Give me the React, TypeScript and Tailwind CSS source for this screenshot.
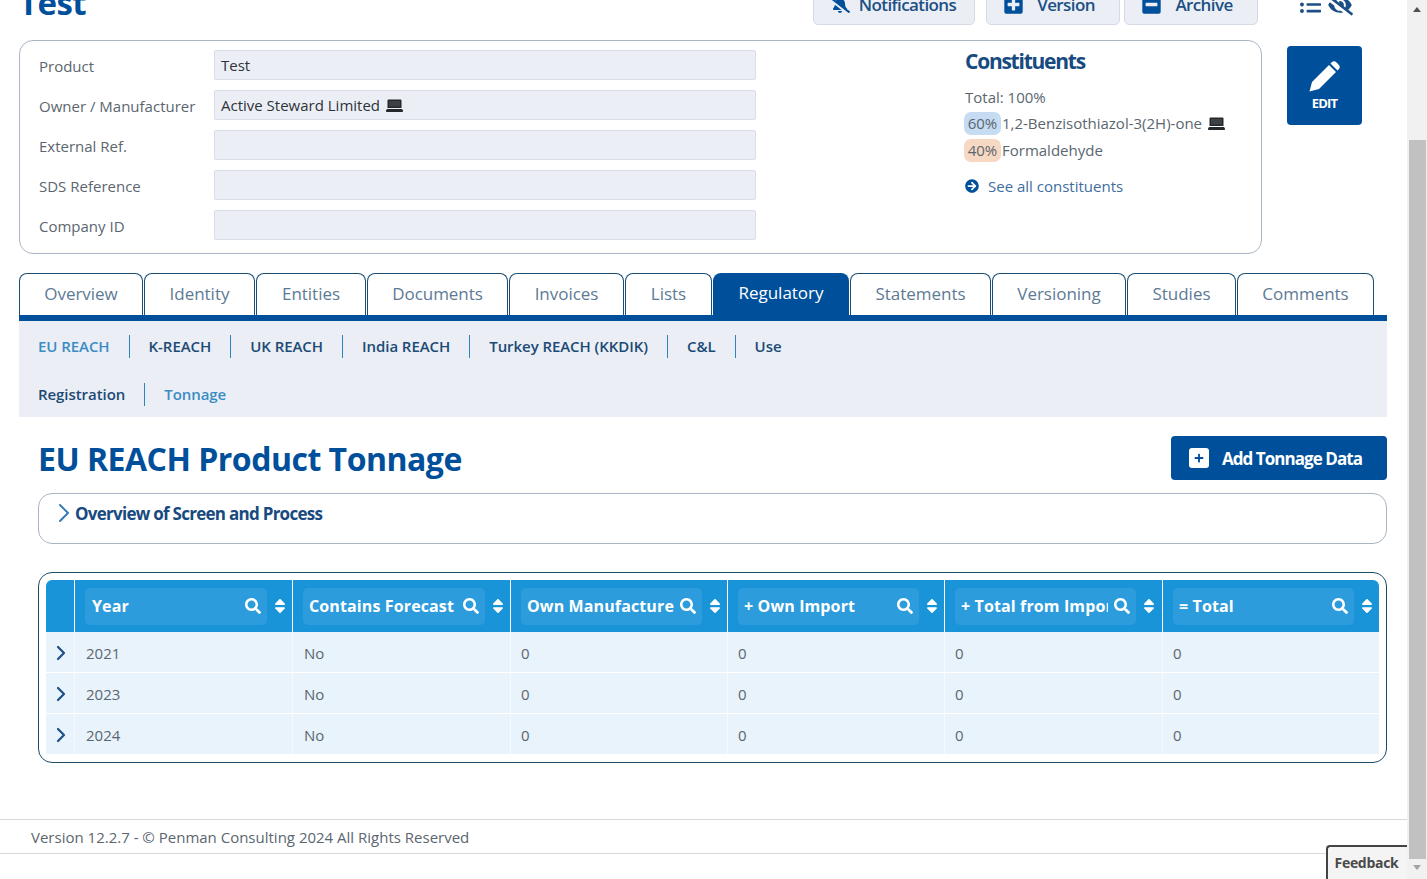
import { ChevronRight } from 'lucide-react';
import {
  FaArrowCircleRight,
  FaBellSlash,
  FaEyeSlash,
  FaListUl,
  FaMinusSquare,
  FaPlus,
  FaPlusSquare,
  FaSearch,
  FaSort,
} from 'react-icons/fa';

const fields = [
  { label: 'Product', value: 'Test' },
  { label: 'Owner / Manufacturer', value: 'Active Steward Limited', laptop: true },
  { label: 'External Ref.', value: '' },
  { label: 'SDS Reference', value: '' },
  { label: 'Company ID', value: '' },
];

const tabs = [
  { name: 'Overview', w: 'w-[124px]' },
  { name: 'Identity', w: 'w-[111px]' },
  { name: 'Entities', w: 'w-[110px]' },
  { name: 'Documents', w: 'w-[141px]' },
  { name: 'Invoices', w: 'w-[115px]' },
  { name: 'Lists', w: 'w-[87px]' },
  { name: 'Regulatory', w: 'w-[136px]', active: true },
  { name: 'Statements', w: 'w-[141px]' },
  { name: 'Versioning', w: 'w-[134px]' },
  { name: 'Studies', w: 'w-[109px]' },
  { name: 'Comments', w: 'w-[137px]' },
];

const columns = [
  { name: 'Year', w: 'w-[218px]', chip: 'w-[182px]', cell: 'pl-[11px]' },
  { name: 'Contains Forecast', w: 'w-[218px]', chip: 'w-[182px]', cell: 'pl-[11px]' },
  { name: 'Own Manufacture', w: 'w-[217px]', chip: 'w-[181px]', cell: 'pl-[10px]' },
  { name: '+ Own Import', w: 'w-[217px]', chip: 'w-[181px]', cell: 'pl-[10px]' },
  { name: '+ Total from Import', w: 'w-[218px]', chip: 'w-[181px]', cell: 'pl-[10px]' },
  { name: '= Total', w: 'w-[216px]', chip: 'w-[181px]', cell: 'pl-[10px]' },
];

const rows = [
  ['2021', 'No', '0', '0', '0', '0'],
  ['2023', 'No', '0', '0', '0', '0'],
  ['2024', 'No', '0', '0', '0', '0'],
];

function Laptop() {
  return (
    <svg width="17" height="13" viewBox="0 0 17 13" className="shrink-0">
      <path d="M2.5 0.5h12a1 1 0 0 1 1 1V9h-14V1.500a1 1 0 0 1 1-1z" fill="#26292c" />
      <rect x="3" y="2" width="11" height="5.500" fill="#3c4146" />
      <path d="M1 10h15l1 1.500a1 1 0 0 1-1 1.500H1a1 1 0 0 1-1-1.500z" fill="#26292c" />
    </svg>
  );
}

function SubNav({ items, activeItem }: { items: string[]; activeItem: string }) {
  return (
    <div className="flex h-[48px] items-center pt-[2px] pl-[19px]">
      {items.map((item, i) => (
        <div key={item} className="flex items-center">
          {i > 0 && <div className="mx-[19px] h-[23px] w-px bg-[#2f84b9]" />}
          <span
            className={`text-[15px] font-semibold tracking-[-0.06px] ${item === activeItem ? 'text-[#3a8cc4]' : 'text-[#1c4a75]'}`}
          >
            {item}
          </span>
        </div>
      ))}
    </div>
  );
}

export default function App() {
  return (
    <div className="flex h-[879px] overflow-hidden bg-white font-['Open_Sans',sans-serif] text-[15px] text-[#5b6670]">
      <div className="relative w-[1407px] shrink-0">
        {/* page is scrolled, top of the header is cut off */}
        <div className="-mt-[30px] mb-[15px] flex h-[55px] items-end justify-between pl-[19px]">
          <h1 className="-mb-[3px] text-[33px] leading-[50px] font-bold tracking-[-0.6px] text-[#004f9b]">Test</h1>
          <div className="flex items-center">
            <div className="flex h-[55px] w-[162px] items-center justify-center gap-[9px] rounded-b-[5px] border border-[#d5dbe5] bg-[#ebeff5] pt-[14px] pr-[2px] text-[17px] font-semibold tracking-[-0.6px] text-[#1c4f85]">
              <FaBellSlash className="text-[#004f9b]" size={20} />
              Notifications
            </div>
            <div className="ml-[11px] flex h-[55px] w-[134px] items-center justify-center gap-[13px] rounded-b-[5px] border border-[#d5dbe5] bg-[#ebeff5] pt-[14px] pr-[8px] text-[17px] font-semibold tracking-[-0.6px] text-[#1c4f85]">
              <FaPlusSquare className="text-[#004f9b]" size={21} />
              Version
            </div>
            <div className="ml-[4px] flex h-[55px] w-[134px] items-center justify-center gap-[13px] rounded-b-[5px] border border-[#d5dbe5] bg-[#ebeff5] pt-[14px] pr-[8px] text-[17px] font-semibold tracking-[-0.6px] text-[#1c4f85]">
              <FaMinusSquare className="text-[#004f9b]" size={21} />
              Archive
            </div>
            <div className="mr-[54px] ml-[42px] flex w-[53px] items-center justify-between pt-[14px] text-[#1c4f85]">
              <FaListUl size={21} />
              <FaEyeSlash size={26} />
            </div>
          </div>
        </div>

        <div className="flex items-start pl-[19px]">
          <div className="flex h-[214px] w-[1243px] rounded-[14px] border border-[#a9b5c2] pt-[9px] pl-[18px]">
            <div className="flex w-[719px] flex-col gap-[10px]">
              {fields.map((field) => (
                <div key={field.label} className="flex h-[30px] items-center">
                  <span className="w-[175px] shrink-0 pt-[3px] pl-px text-[15px]">{field.label}</span>
                  <div className="ml-px flex h-[30px] w-[542px] items-center gap-[6px] rounded-[2px] border border-[#d8dde6] bg-[#ebeff5] pl-[6px] text-[15px] text-[#2e3338]">
                    {field.value}
                    {field.laptop && <Laptop />}
                  </div>
                </div>
              ))}
            </div>
            <div className="ml-[208px] flex flex-col">
              <h2 className="-mt-[2px] text-[21px] leading-[26px] font-bold tracking-[-1.25px] text-[#164a80]">
                Constituents
              </h2>
              <div className="mt-[11px] leading-[24px]">Total: 100%</div>
              <div className="mt-[3px] flex h-[23px] items-center">
                <span className="-ml-[1px] flex h-[23px] w-[37px] items-center justify-center rounded-[7px] bg-[#c5dcf3]">
                  60%
                </span>
                <span className="ml-px">1,2-Benzisothiazol-3(2H)-one</span>
                <span className="ml-[6px]">
                  <Laptop />
                </span>
              </div>
              <div className="mt-[4px] flex h-[23px] items-center">
                <span className="-ml-[1px] flex h-[23px] w-[37px] items-center justify-center rounded-[7px] bg-[#f7d8c3]">
                  40%
                </span>
                <span className="ml-px">Formaldehyde</span>
              </div>
              <div className="mt-[13px] flex items-center text-[#3f6d9e]">
                <FaArrowCircleRight className="text-[#004f9b]" size={14} />
                <span className="ml-[9px]">See all constituents</span>
              </div>
            </div>
          </div>
          <div className="mt-[6px] ml-[25px] flex h-[79px] w-[75px] flex-col items-center rounded-[4px] bg-[#004f9b] pt-[15px] text-white">
            {/* pencil */}
            <svg width="31" height="31" viewBox="0 0 31 31" fill="currentColor">
              <path d="M0.500 30.500l2.500-9.500L20 4l7 7L10 28z" />
              <path d="M21.500 2.500l1-1a3.500 3.500 0 0 1 5 0l2 2a3.500 3.500 0 0 1 0 5l-1 1z" />
            </svg>
            <span className="mt-[2px] text-[13px] leading-[18px] font-bold tracking-[-0.8px]">EDIT</span>
          </div>
        </div>

        <div className="mt-[19px] ml-[19px] w-[1368px]">
          <div className="flex items-end">
            {tabs.map((tab) => (
              <div
                key={tab.name}
                className={`mr-px flex h-[42px] shrink-0 items-center justify-center rounded-t-[8px] pb-[2px] text-[17px] tracking-[-0.03px] ${tab.w} ${
                  tab.active
                    ? 'bg-[#004f9b] text-white'
                    : 'border-x border-t border-[#1a4f75] bg-white text-[#5d7a95]'
                }`}
              >
                {tab.name}
              </div>
            ))}
          </div>
          <div className="h-[6px] bg-[#004f9b]" />
          <div className="h-[96px] bg-[#ebeff5]">
            <SubNav
              items={['EU REACH', 'K-REACH', 'UK REACH', 'India REACH', 'Turkey REACH (KKDIK)', 'C&L', 'Use']}
              activeItem="EU REACH"
            />
            <SubNav items={['Registration', 'Tonnage']} activeItem="Tonnage" />
          </div>

          <div className="mt-[19px] flex h-[44px] items-center justify-between pl-[19px]">
            <h2 className="pt-[2px] text-[32px] font-bold tracking-[-0.5px] text-[#004f9b]">EU REACH Product Tonnage</h2>
            <div className="flex h-[44px] w-[216px] items-center rounded-[4px] bg-[#004f9b] pl-[18px] text-[17px] font-bold tracking-[-0.95px] text-white">
              <span className="flex h-[20px] w-[20px] items-center justify-center rounded-[3px] bg-white text-[#004f9b]">
                <FaPlus size={10} />
              </span>
              <span className="ml-[13px] pt-[2px]">Add Tonnage Data</span>
            </div>
          </div>

          <div className="mt-[13px] ml-[19px] flex h-[51px] items-start rounded-[14px] border border-[#a9b5c2] pt-[7px] pl-[16px]">
            <ChevronRight className="-mt-[4px] -ml-[7px] text-[#2f7ab5]" size={32} strokeWidth={1.4} />
            <span className="mt-[1px] -ml-[5px] text-[17px] leading-[24px] font-bold tracking-[-0.73px] text-[#164a80]">
              Overview of Screen and Process
            </span>
          </div>

          <div className="mt-[28px] ml-[19px] h-[191px] rounded-[14px] border border-[#1f4a68] pt-[7px] pl-[7px]">
            <div className="w-[1333px]">
              <div className="flex h-[52px] rounded-t-[6px] bg-[#1a94d8]">
                <div className="w-[29px] shrink-0 border-r border-white" />
                {columns.map((col, i) => (
                  <div
                    key={col.name}
                    className={`flex shrink-0 items-center pl-[10px] ${col.w} ${i < 5 ? 'border-r border-white' : ''}`}
                  >
                    <div
                      className={`flex h-[37px] items-center justify-between rounded-[5px] bg-[#2d9cdc] px-[6px] text-[16px] font-bold tracking-[0.12px] text-white ${col.chip}`}
                    >
                      <span className={`w-[147px] overflow-hidden whitespace-nowrap ${i === 0 ? 'pl-px' : ''}`}>
                        {col.name}
                      </span>
                      <FaSearch className="shrink-0" size={16} />
                    </div>
                    <FaSort className="ml-[4px] shrink-0 text-white" size={18} />
                  </div>
                ))}
              </div>
              <div className="flex flex-col gap-px">
                {rows.map((row) => (
                  <div key={row[0]} className="flex h-[40px] bg-[#e8f3fb]">
                    <div className="flex w-[29px] shrink-0 items-center justify-center border-r border-white/60 pt-[2px] pl-[2px] text-[#1c4f85]">
                      <ChevronRight size={24} strokeWidth={2.2} />
                    </div>
                    {row.map((cell, i) => (
                      <div
                        key={i}
                        className={`flex shrink-0 items-center pt-[2px] ${columns[i].w} ${columns[i].cell} ${i < 5 ? 'border-r border-white/60' : ''}`}
                      >
                        {cell}
                      </div>
                    ))}
                  </div>
                ))}
              </div>
            </div>
          </div>
        </div>

        <div className="mt-[56px] flex h-[35px] items-center border-y border-[#d9d9d9] pt-[2px] pl-[31px] text-[15px]">
          Version 12.2.7 - © Penman Consulting 2024 All Rights Reserved
        </div>

        <div className="absolute right-0 bottom-0 flex h-[34px] w-[81px] items-center justify-center rounded-tl-[4px] border-t-2 border-l-2 border-[#444] bg-[#f4f4f4] pr-[2px] pb-[2px] text-[14px] font-bold tracking-[-0.3px] text-[#4a4a4a]">
          Feedback
        </div>
      </div>

      {/* scrollbar */}
      <div className="relative flex h-full w-[20px] flex-col items-center bg-[#f1f1f1]">
        <div className="h-[140px] w-full pt-[7px]">
          <div className="mx-auto h-0 w-0 border-x-[4px] border-b-[5px] border-x-transparent border-b-[#505050]" />
        </div>
        <div className="h-[719px] w-[17px] bg-[#c1c1c1]" />
        <div className="mt-[6px] h-0 w-0 border-x-[4px] border-t-[5px] border-x-transparent border-t-[#a3a3a3]" />
      </div>
    </div>
  );
}
